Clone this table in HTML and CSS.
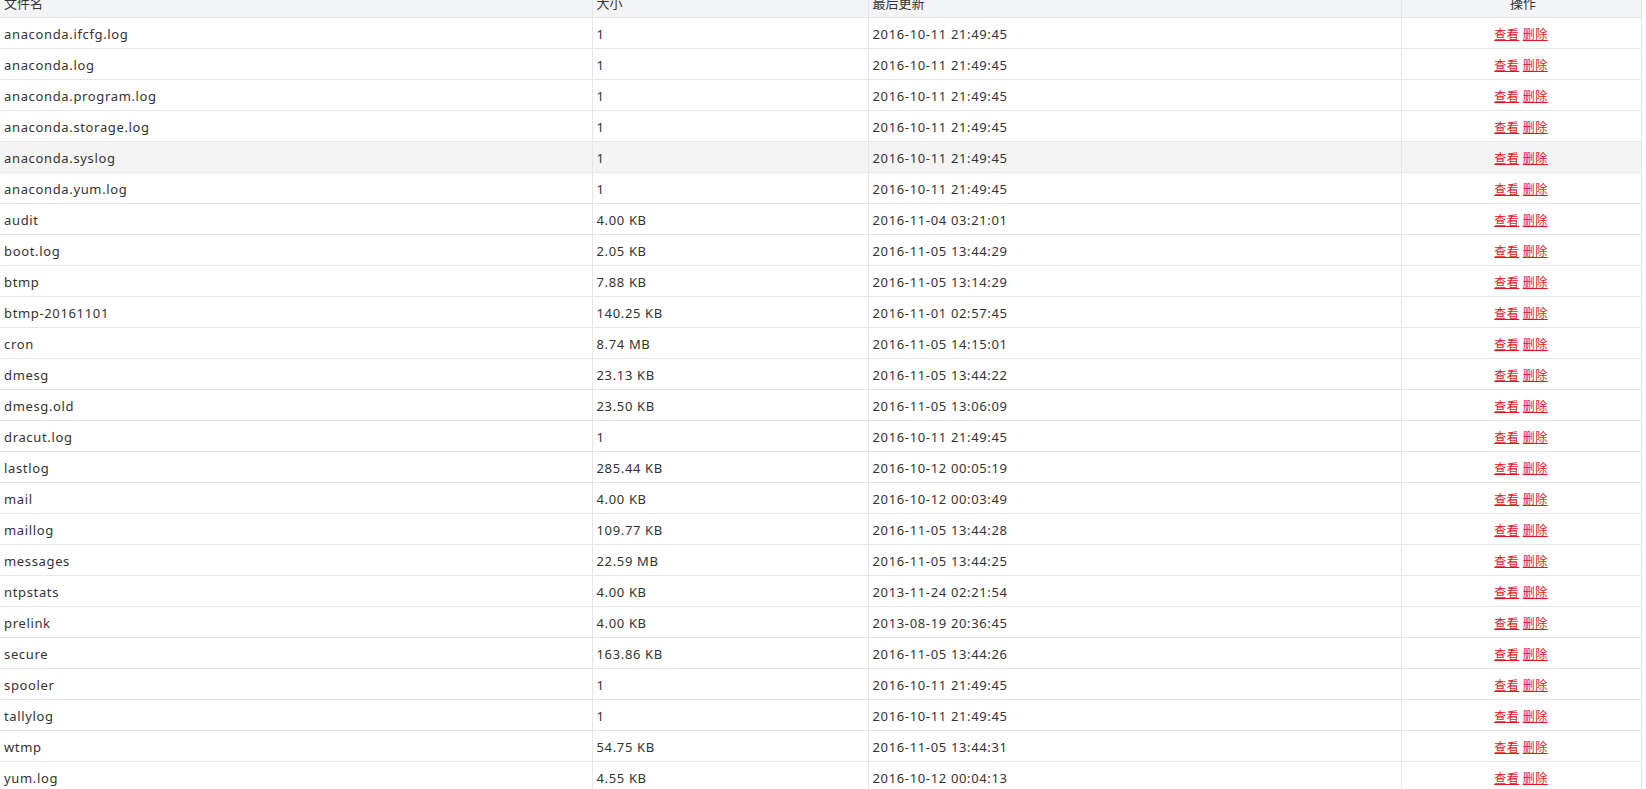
FILE: index.html
```html
<!DOCTYPE html>
<html lang="zh">
<head>
<meta charset="utf-8">
<title>日志文件</title>
<link rel="stylesheet" href="styles.css">
</head>
<body>
<div class="wrap">
<table class="files">
<colgroup>
<col class="c-name"><col class="c-size"><col class="c-time"><col class="c-op">
</colgroup>
<thead>
<tr><th class="left">文件名</th><th class="left">大小</th><th class="left">最后更新</th><th>操作</th></tr>
</thead>
<tbody>
<tr><td>anaconda.ifcfg.log</td><td>1</td><td>2016-10-11 21:49:45</td><td class="op"><a href="#">查看</a> <a href="#">删除</a></td></tr>
<tr><td>anaconda.log</td><td>1</td><td>2016-10-11 21:49:45</td><td class="op"><a href="#">查看</a> <a href="#">删除</a></td></tr>
<tr><td>anaconda.program.log</td><td>1</td><td>2016-10-11 21:49:45</td><td class="op"><a href="#">查看</a> <a href="#">删除</a></td></tr>
<tr><td>anaconda.storage.log</td><td>1</td><td>2016-10-11 21:49:45</td><td class="op"><a href="#">查看</a> <a href="#">删除</a></td></tr>
<tr class="hover"><td>anaconda.syslog</td><td>1</td><td>2016-10-11 21:49:45</td><td class="op"><a href="#">查看</a> <a href="#">删除</a></td></tr>
<tr><td>anaconda.yum.log</td><td>1</td><td>2016-10-11 21:49:45</td><td class="op"><a href="#">查看</a> <a href="#">删除</a></td></tr>
<tr><td>audit</td><td>4.00 KB</td><td>2016-11-04 03:21:01</td><td class="op"><a href="#">查看</a> <a href="#">删除</a></td></tr>
<tr><td>boot.log</td><td>2.05 KB</td><td>2016-11-05 13:44:29</td><td class="op"><a href="#">查看</a> <a href="#">删除</a></td></tr>
<tr><td>btmp</td><td>7.88 KB</td><td>2016-11-05 13:14:29</td><td class="op"><a href="#">查看</a> <a href="#">删除</a></td></tr>
<tr><td>btmp-20161101</td><td>140.25 KB</td><td>2016-11-01 02:57:45</td><td class="op"><a href="#">查看</a> <a href="#">删除</a></td></tr>
<tr><td>cron</td><td>8.74 MB</td><td>2016-11-05 14:15:01</td><td class="op"><a href="#">查看</a> <a href="#">删除</a></td></tr>
<tr><td>dmesg</td><td>23.13 KB</td><td>2016-11-05 13:44:22</td><td class="op"><a href="#">查看</a> <a href="#">删除</a></td></tr>
<tr><td>dmesg.old</td><td>23.50 KB</td><td>2016-11-05 13:06:09</td><td class="op"><a href="#">查看</a> <a href="#">删除</a></td></tr>
<tr><td>dracut.log</td><td>1</td><td>2016-10-11 21:49:45</td><td class="op"><a href="#">查看</a> <a href="#">删除</a></td></tr>
<tr><td>lastlog</td><td>285.44 KB</td><td>2016-10-12 00:05:19</td><td class="op"><a href="#">查看</a> <a href="#">删除</a></td></tr>
<tr><td>mail</td><td>4.00 KB</td><td>2016-10-12 00:03:49</td><td class="op"><a href="#">查看</a> <a href="#">删除</a></td></tr>
<tr><td>maillog</td><td>109.77 KB</td><td>2016-11-05 13:44:28</td><td class="op"><a href="#">查看</a> <a href="#">删除</a></td></tr>
<tr><td>messages</td><td>22.59 MB</td><td>2016-11-05 13:44:25</td><td class="op"><a href="#">查看</a> <a href="#">删除</a></td></tr>
<tr><td>ntpstats</td><td>4.00 KB</td><td>2013-11-24 02:21:54</td><td class="op"><a href="#">查看</a> <a href="#">删除</a></td></tr>
<tr><td>prelink</td><td>4.00 KB</td><td>2013-08-19 20:36:45</td><td class="op"><a href="#">查看</a> <a href="#">删除</a></td></tr>
<tr><td>secure</td><td>163.86 KB</td><td>2016-11-05 13:44:26</td><td class="op"><a href="#">查看</a> <a href="#">删除</a></td></tr>
<tr><td>spooler</td><td>1</td><td>2016-10-11 21:49:45</td><td class="op"><a href="#">查看</a> <a href="#">删除</a></td></tr>
<tr><td>tallylog</td><td>1</td><td>2016-10-11 21:49:45</td><td class="op"><a href="#">查看</a> <a href="#">删除</a></td></tr>
<tr><td>wtmp</td><td>54.75 KB</td><td>2016-11-05 13:44:31</td><td class="op"><a href="#">查看</a> <a href="#">删除</a></td></tr>
<tr><td>yum.log</td><td>4.55 KB</td><td>2016-10-12 00:04:13</td><td class="op"><a href="#">查看</a> <a href="#">删除</a></td></tr>
</tbody>
</table>
</div>
</body>
</html>
```

FILE: styles.css
```css
html, body {
  margin: 0;
  padding: 0;
  background: #ffffff;
  overflow: hidden;
}
body {
  font-family: "Noto Sans", "Noto Sans CJK SC", sans-serif;
  color: #333333;
}
.wrap {
  width: 1641px;
  margin-top: -14px;
}
.files {
  width: 1641px;
  border-collapse: collapse;
  table-layout: fixed;
  border-right: 1px solid #e2e2e2;
}
.c-name { width: 592px; }
.c-size { width: 276px; }
.c-time { width: 533px; }
.c-op { width: 240px; }
.files th,
.files td {
  height: 31px;
  padding: 2px 0 0 4px;
  font-size: 13px;
  letter-spacing: 0.65px;
  font-weight: normal;
  border-bottom: 1px solid #e6e6e6;
  border-left: 1px solid #e6e6e6;
  white-space: nowrap;
  box-sizing: border-box;
}
.files th:first-child,
.files td:first-child {
  border-left: none;
}
.files th {
  background: #f3f4f6;
  text-align: center;
  font-family: "Noto Sans CJK SC", sans-serif;
  font-size: 13px;
  letter-spacing: 0;
  color: #333;
  border-bottom: 1px solid #e2e2e2;
}
.files th.left { text-align: left; }
.files tr.hover td { background: #f4f4f4; }
.files td.op {
  text-align: center;
  padding: 2px 0 0 0;
  letter-spacing: 0;
}
.op a {
  font-family: "Noto Sans CJK SC", sans-serif;
  font-size: 12px;
  color: #e8141a;
  text-decoration: underline;
  letter-spacing: 0.5px;
}
```
